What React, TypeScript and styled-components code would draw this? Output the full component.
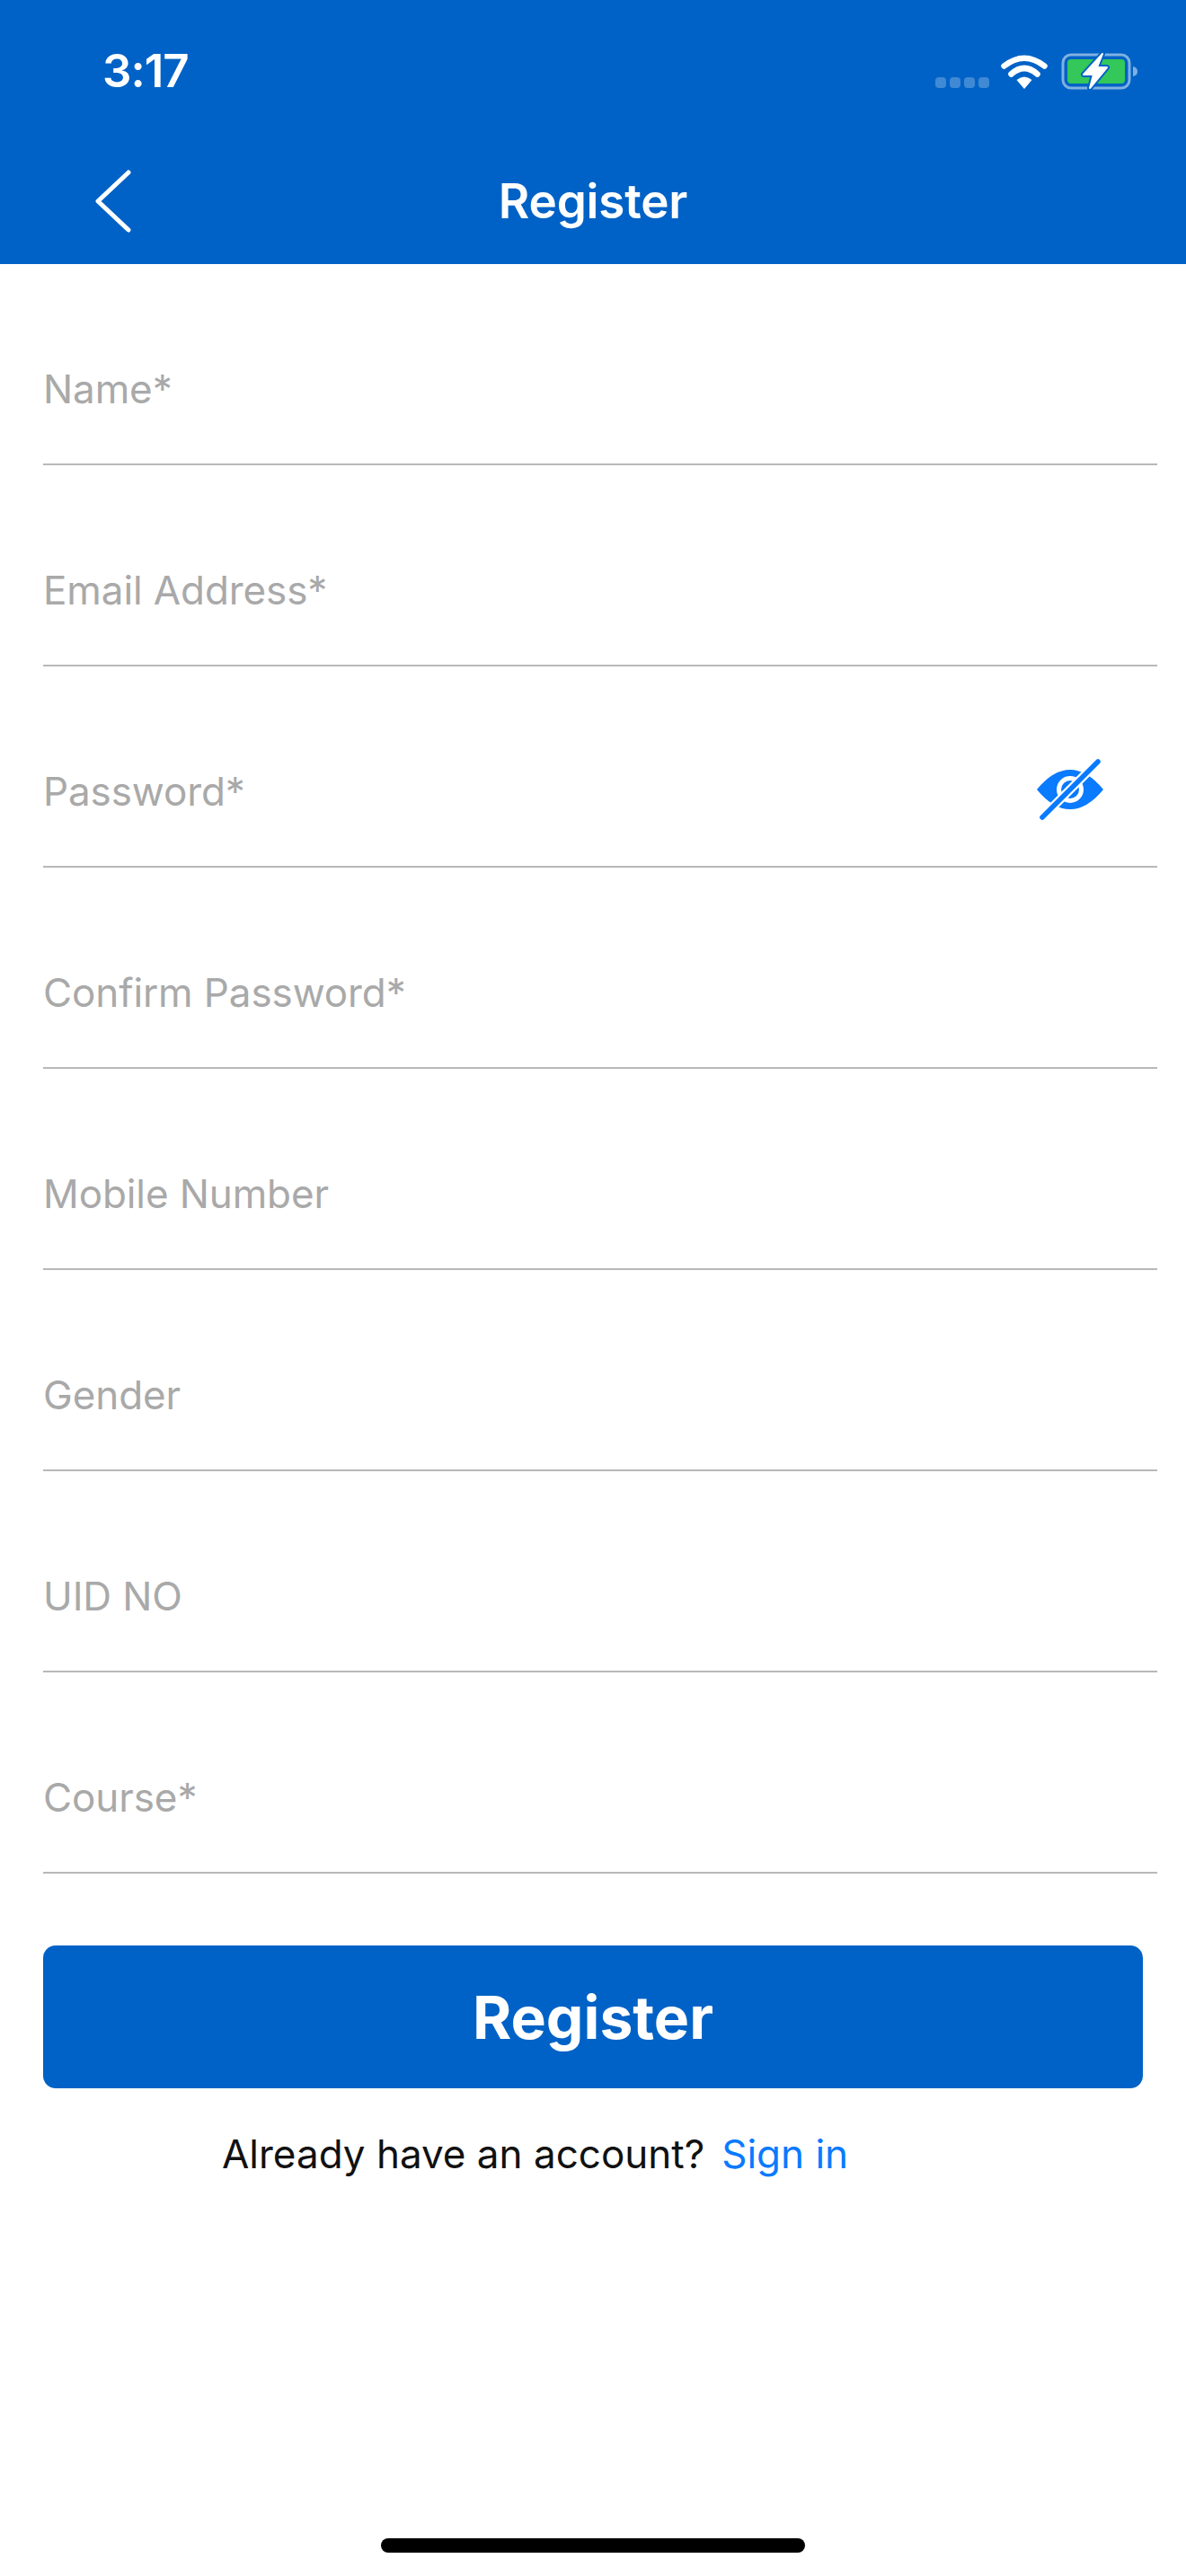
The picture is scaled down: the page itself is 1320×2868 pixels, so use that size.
import styled, { createGlobalStyle } from "styled-components";

const GlobalStyle = createGlobalStyle`
  html, body {
    margin: 0;
    padding: 0;
    background: #ffffff;
  }
  * {
    box-sizing: border-box;
  }
`;

const Screen = styled.div`
  width: 1320px;
  height: 2868px;
  display: flex;
  flex-direction: column;
  background: #ffffff;
  font-family: Inter, "Liberation Sans", sans-serif;
  overflow: hidden;
`;

const Header = styled.header`
  height: 294px;
  flex-shrink: 0;
  background: #0062c6;
  color: #ffffff;
  display: flex;
  flex-direction: column;
`;

const StatusBar = styled.div`
  height: 157px;
  display: flex;
  align-items: center;
  padding: 0 52px 0 114px;
`;

const Time = styled.span`
  font-size: 51px;
  font-weight: 600;
  letter-spacing: -1px;
  margin-right: auto;
`;

const Signal = styled.div`
  display: flex;
  gap: 4px;
  margin: 26px 13px 0 0;
`;

const Dot = styled.span`
  width: 12px;
  height: 12px;
  border-radius: 4px;
  background: rgba(255, 255, 255, 0.25);
`;

const NavBar = styled.div`
  flex: 1;
  display: grid;
  grid-template-columns: 1fr auto 1fr;
  align-items: center;
  padding: 0 104px 4px;
`;

const Title = styled.h1`
  margin: 0;
  font-size: 53px;
  font-weight: 600;
  letter-spacing: -0.2px;
`;

const Form = styled.main`
  display: flex;
  flex-direction: column;
  padding: 0 32px 0 48px;
`;

const Field = styled.div`
  height: 224px;
  display: flex;
  align-items: flex-end;
  justify-content: space-between;
  padding: 0 60px 55px 0;
  border-bottom: 2px solid #b8b8b8;
`;

const Placeholder = styled.span`
  font-size: 44px;
  line-height: 56px;
  letter-spacing: -0.1px;
  color: #a9a9a9;
`;

const EyeIcon = styled.svg`
  display: block;
  margin-bottom: -6px;
`;

const SubmitButton = styled.button`
  width: 1224px;
  height: 159px;
  margin-top: 80px;
  border: 0;
  border-radius: 14px;
  background: #0062c6;
  color: #ffffff;
  font-family: inherit;
  font-size: 66px;
  font-weight: 700;
`;

const Footer = styled.p`
  margin: 46px 0 0;
  padding-left: 199px;
  display: flex;
  gap: 19px;
  font-size: 44px;
  line-height: 54px;
  color: #111111;
`;

const SignIn = styled.a`
  color: #0a7aff;
`;

const HomeIndicator = styled.div`
  width: 472px;
  height: 16px;
  margin: auto auto 26px;
  border-radius: 8px;
  background: #000000;
`;

function WifiGlyph() {
  return (
    <svg width="52" height="38" viewBox="0 0 52 38" style={{ marginTop: 2 }}>
      <path d="M26 38 L17.5 28 Q26 21 34.5 28 Z" fill="#fff" />
      <path d="M11.5 21.5 Q26 8.5 40.5 21.5" fill="none" stroke="#fff" strokeWidth="6.5" strokeLinecap="round" />
      <path d="M3.5 12.5 Q26 -5 48.5 12.5" fill="none" stroke="#fff" strokeWidth="6.5" strokeLinecap="round" />
    </svg>
  );
}

const boltPath = "M47 3 L26 26 L37 26 L33 41 L52 18 L41 18 Z";

function BatteryGlyph() {
  return (
    <svg width="88" height="44" viewBox="0 0 88 44" style={{ marginLeft: 14 }}>
      <rect x="3" y="4" width="74" height="37" rx="9" fill="none" stroke="#7fb0e2" strokeWidth="3" />
      <rect x="8" y="9" width="64" height="27" rx="4" fill="#34c759" />
      <path d="M81 17 Q86 18 86 22.5 Q86 27 81 28 Z" fill="#7fb0e2" />
      <path d={boltPath} fill="#0062c6" stroke="#0062c6" strokeWidth="6" strokeLinejoin="round" />
      <path d={boltPath} fill="#fff" stroke="#fff" strokeWidth="2" strokeLinejoin="round" />
    </svg>
  );
}

function BackGlyph() {
  return (
    <svg width="44" height="70" viewBox="0 0 44 70">
      <path d="M39 3 L5 35 L39 67" fill="none" stroke="#fff" strokeWidth="5" strokeLinecap="round" strokeLinejoin="round" />
    </svg>
  );
}

function EyeOffGlyph() {
  return (
    <EyeIcon width="74" height="70" viewBox="0 0 74 70">
      <path
        fillRule="evenodd"
        d="M0 34 Q18 12 37 12 Q56 12 74 34 Q56 56 37 56 Q18 56 0 34 Z M37 19 A15 15 0 1 0 37 49 A15 15 0 1 0 37 19 Z"
        fill="#0a7aff"
      />
      <circle cx="37" cy="34" r="10" fill="#0a7aff" />
      <path d="M5 66 L69 2" stroke="#ffffff" strokeWidth="10" />
      <path d="M6 65 L68 3" stroke="#0a7aff" strokeWidth="5.5" strokeLinecap="round" />
    </EyeIcon>
  );
}

const fields = [
  "Name*",
  "Email Address*",
  "Password*",
  "Confirm Password*",
  "Mobile Number",
  "Gender",
  "UID NO",
  "Course*",
];

export default function App() {
  return (
    <Screen>
      <GlobalStyle />
      <Header>
        <StatusBar>
          <Time>3:17</Time>
          <Signal>
            <Dot />
            <Dot />
            <Dot />
            <Dot />
          </Signal>
          <WifiGlyph />
          <BatteryGlyph />
        </StatusBar>
        <NavBar>
          <BackGlyph />
          <Title>Register</Title>
        </NavBar>
      </Header>
      <Form>
        {fields.map((label) => (
          <Field key={label}>
            <Placeholder>{label}</Placeholder>
            {label === "Password*" && <EyeOffGlyph />}
          </Field>
        ))}
        <SubmitButton>Register</SubmitButton>
        <Footer>
          Already have an account?
          <SignIn>Sign in</SignIn>
        </Footer>
      </Form>
      <HomeIndicator />
    </Screen>
  );
}
